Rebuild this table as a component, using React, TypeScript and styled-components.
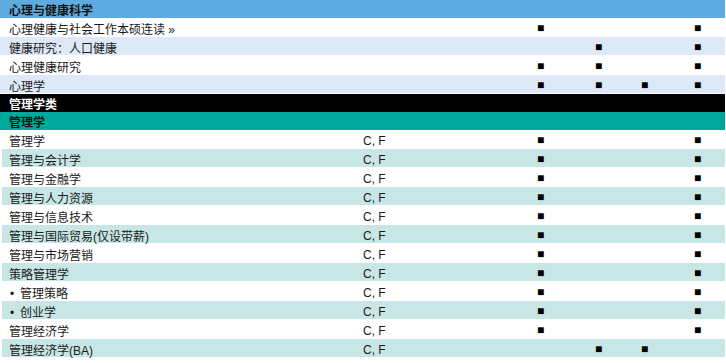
import React from "react";
import styled, { createGlobalStyle, css } from "styled-components";

const Global = createGlobalStyle`
  html, body { margin: 0; padding: 0; background: #ffffff; }
  body {
    font-family: "Liberation Sans", Arial, "Noto Sans CJK SC", sans-serif;
    font-size: 12px;
    color: #1a1a1a;
  }
`;

type Band = "blue" | "black" | "teal";

const Table = styled.div`
  width: 725px;
  display: flex;
  flex-direction: column;
`;

const bandStyles: Record<Band, ReturnType<typeof css>> = {
  blue: css`
    background: #5eacdf;
    color: #111111;
  `,
  black: css`
    background: #000000;
    color: #ffffff;
  `,
  teal: css`
    background: #00a89c;
    color: #111111;
  `,
};

const BandRow = styled.div<{ $band: Band }>`
  height: 18px;
  box-sizing: border-box;
  display: flex;
  align-items: center;
  padding: 1px 0 0 9px;
  font-weight: 700;
  font-family: "Liberation Sans", "Noto Sans CJK SC", sans-serif;
  ${(p) => bandStyles[p.$band]}
`;

const Row = styled.div<{ $tint: string | null; $inset?: boolean }>`
  height: 19px;
  display: grid;
  grid-template-columns: ${(p) => (p.$inset ? "353px" : "355px")} 182px 58px 46px 53px 1fr;
  align-items: center;
  background: ${(p) => p.$tint ?? "#ffffff"};
  background-clip: padding-box;
  box-sizing: border-box;
  border-bottom: 1px solid rgba(255, 255, 255, 0.55);
  border-left: ${(p) => (p.$inset ? "2px solid #ffffff" : "0")};
`;

const Name = styled.div<{ $inset?: boolean }>`
  padding: 2px 0 0 ${(p) => (p.$inset ? "7px" : "9px")};
  white-space: nowrap;
  font-family: "Liberation Sans", "Noto Sans CJK SC", sans-serif;
`;

const Bullet = styled.span`
  display: inline-block;
  width: 10px;
  padding-left: 1px;
`;

const Code = styled.div`
  padding: 2px 0 0 8px;
  white-space: nowrap;
`;

const Mark = styled.div`
  font-family: "Liberation Sans", Arial, sans-serif;
  font-size: 12px;
  color: #000000;
  line-height: 1;
  padding-top: 1px;
`;

type Item = { name: string; code?: string; bullet?: boolean; marks: boolean[] };

const psych: Item[] = [
  { name: "心理健康与社会工作本硕连读 »", marks: [true, false, false, true] },
  { name: "健康研究：人口健康", marks: [false, true, false, true] },
  { name: "心理健康研究", marks: [true, true, false, true] },
  { name: "心理学", marks: [true, true, true, true] },
];

const mgmt: Item[] = [
  { name: "管理学", code: "C, F", marks: [true, false, false, true] },
  { name: "管理与会计学", code: "C, F", marks: [true, false, false, true] },
  { name: "管理与金融学", code: "C, F", marks: [true, false, false, true] },
  { name: "管理与人力资源", code: "C, F", marks: [true, false, false, true] },
  { name: "管理与信息技术", code: "C, F", marks: [true, false, false, true] },
  { name: "管理与国际贸易(仅设带薪)", code: "C, F", marks: [true, false, false, true] },
  { name: "管理与市场营销", code: "C, F", marks: [true, false, false, true] },
  { name: "策略管理学", code: "C, F", marks: [true, false, false, true] },
  { name: "管理策略", code: "C, F", bullet: true, marks: [true, false, false, true] },
  { name: "创业学", code: "C, F", bullet: true, marks: [true, false, false, true] },
  { name: "管理经济学", code: "C, F", marks: [true, false, false, true] },
  { name: "管理经济学(BA)", code: "C, F", marks: [false, true, true, false] },
];

function DataRow({ item, tint, inset }: { item: Item; tint: string | null; inset?: boolean }) {
  return (
    <Row $tint={tint} $inset={inset}>
      <Name $inset={inset}>
        {item.bullet && <Bullet>•</Bullet>}
        {item.name}
      </Name>
      <Code>{item.code ?? ""}</Code>
      {item.marks.map((m, i) => (
        <Mark key={i}>{m ? "■" : ""}</Mark>
      ))}
    </Row>
  );
}

export default function App() {
  return (
    <>
      <Global />
      <Table>
        <BandRow $band="blue">心理与健康科学</BandRow>
        {psych.map((it, i) => (
          <DataRow key={it.name} item={it} tint={i % 2 === 1 ? "#dde9f6" : null} />
        ))}
        <BandRow $band="black">管理学类</BandRow>
        <BandRow $band="teal">管理学</BandRow>
        {mgmt.map((it, i) => (
          <DataRow key={it.name} item={it} tint={i % 2 === 1 ? "#c8e6e5" : null} inset />
        ))}
      </Table>
    </>
  );
}
